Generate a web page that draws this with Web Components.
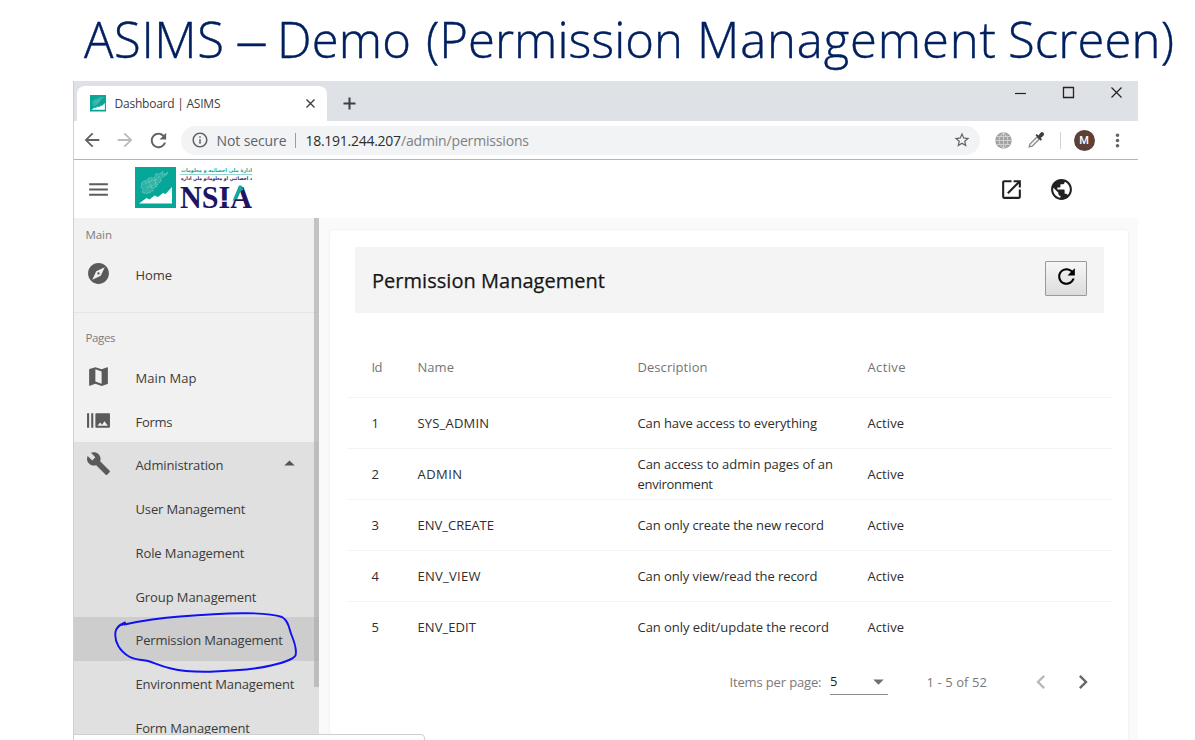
<!DOCTYPE html>
<html lang="en">
<head>
<meta charset="utf-8">
<title>ASIMS – Demo (Permission Management Screen)</title>
<style>
html,body{margin:0;background:#fff;overflow:hidden}
body{width:1195px;height:740px;font-family:"Open Sans","Noto Sans",sans-serif}
</style>
</head>
<body>
<demo-slide></demo-slide>
<script>
const define=(name,html,setup)=>customElements.define(name,class extends HTMLElement{
  connectedCallback(){
    if(this.shadowRoot)return;
    const t=document.createElement('template');
    t.innerHTML=typeof html==='function'?html(this):html;
    this.attachShadow({mode:'open'}).appendChild(t.content.cloneNode(true));
    if(setup)setup(this);
  }
});

const ICONS={
menu:'M3 18h18v-2H3v2zm0-5h18v-2H3v2zm0-7v2h18V6H3z',
explore:'M12 10.9c-.61 0-1.1.49-1.1 1.1s.49 1.1 1.1 1.1c.61 0 1.1-.49 1.1-1.1s-.49-1.1-1.1-1.1zM12 2C6.48 2 2 6.48 2 12s4.48 10 10 10 10-4.48 10-10S17.52 2 12 2zm2.19 12.19L6 18l3.81-8.19L18 6l-3.81 8.19z',
map:'M20.5 3l-.16.03L15 5.1 9 3 3.36 4.9c-.21.07-.36.25-.36.48V20.5c0 .28.22.5.5.5l.16-.03L9 18.9l6 2.1 5.64-1.9c.21-.07.36-.25.36-.48V3.5c0-.28-.22-.5-.5-.5zM15 19l-6-2.11V5l6 2.11V19z',
burst:'M1 5h2v14H1zm4 0h2v14H5zm17 0H10c-.55 0-1 .45-1 1v12c0 .55.45 1 1 1h12c.55 0 1-.45 1-1V6c0-.55-.45-1-1-1zM11 17l2.5-3.15L15.29 16l2.5-3.22L21 17H11z',
build:'M22.7 19l-9.1-9.1c.9-2.3.4-5-1.5-6.9-2-2-5-2.4-7.4-1.3L9 6 6 9 1.6 4.7C.4 7.1.9 10.1 2.9 12.1c1.9 1.9 4.6 2.4 6.9 1.5l9.1 9.1c.4.4 1 .4 1.4 0l2.3-2.3c.5-.4.5-1.1.1-1.4z',
open:'M19 19H5V5h7V3H5c-1.11 0-2 .9-2 2v14c0 1.1.89 2 2 2h14c1.1 0 2-.9 2-2v-7h-2v7zM14 3v2h3.59l-9.83 9.83 1.41 1.41L19 6.41V10h2V3h-7z',
public:'M12 2C6.48 2 2 6.48 2 12s4.48 10 10 10 10-4.48 10-10S17.52 2 12 2zm-1 17.93c-3.95-.49-7-3.85-7-7.93 0-.62.08-1.21.21-1.79L9 15v1c0 1.1.9 2 2 2v1.93zm6.9-2.54c-.26-.81-1-1.39-1.9-1.39h-1v-3c0-.55-.45-1-1-1H8v-2h2c.55 0 1-.45 1-1V7h2c1.1 0 2-.9 2-2v-.41c2.93 1.19 5 4.06 5 7.41 0 2.08-.8 3.97-2.1 5.39z',
refresh:'M17.65 6.35C16.2 4.9 14.21 4 12 4c-4.42 0-7.99 3.58-7.99 8s3.57 8 7.99 8c3.73 0 6.84-2.55 7.73-6h-2.08c-.82 2.33-3.04 4-5.65 4-3.31 0-6-2.69-6-6s2.69-6 6-6c1.66 0 3.14.69 4.22 1.78L13 11h7V4l-2.35 2.35z',
back:'M20 11H7.83l5.59-5.59L12 4l-8 8 8 8 1.41-1.41L7.83 13H20v-2z',
forward:'M12 4l-1.41 1.41L16.17 11H4v2h12.17l-5.58 5.59L12 20l8-8z',
info:'M11 17h2v-6h-2v6zm1-15C6.48 2 2 6.48 2 12s4.48 10 10 10 10-4.48 10-10S17.52 2 12 2zm0 18c-4.41 0-8-3.59-8-8s3.59-8 8-8 8 3.59 8 8-3.59 8-8 8zM11 9h2V7h-2v2z',
star:'M22 9.24l-7.19-.62L12 2 9.19 8.63 2 9.24l5.46 4.73L5.82 21 12 17.27 18.18 21l-1.63-7.03L22 9.24zM12 15.4l-3.76 2.27 1-4.28-3.32-2.88 4.38-.38L12 6.1l1.71 4.04 4.38.38-3.32 2.88 1 4.28L12 15.4z',
more:'M12 8c1.1 0 2-.9 2-2s-.9-2-2-2-2 .9-2 2 .9 2 2 2zm0 2c-1.1 0-2 .9-2 2s.9 2 2 2 2-.9 2-2-.9-2-2-2zm0 6c-1.1 0-2 .9-2 2s.9 2 2 2 2-.9 2-2-.9-2-2-2z',
left:'M15.41 7.41L14 6l-6 6 6 6 1.41-1.41L10.83 12z',
right:'M10 6L8.59 7.41 13.17 12l-4.58 4.59L10 18l6-6z',
down:'M7 10l5 5 5-5z',
up:'M7 14l5-5 5 5z'};

define('ui-icon',el=>`<style>:host{display:block;flex:none;width:${el.getAttribute('size')}px;height:${el.getAttribute('size')}px}svg{display:block;width:100%;height:100%}</style>
<svg viewBox="0 0 24 24" fill="currentColor"><path d="${ICONS[el.getAttribute('name')]}"/></svg>`);

/* A one-line label whose tracking is adjusted to fill the given width. */
define('ui-text','<style>:host{display:block;flex:none;white-space:nowrap}span{display:inline-block}</style><span><slot></slot></span>',el=>{
  const s=el.shadowRoot.querySelector('span'),w=+el.getAttribute('w'),n=el.textContent.length;
  if(w&&n>1){
    const natural=s.getBoundingClientRect().width;
    s.style.letterSpacing=((w-natural)/(n-1)).toFixed(3)+'px';
    el.style.width=w+'px';
  }
});

const AFG='M3 12l2-2 2 1 2-3 3-1 2 1 2-2 1-3 3 1 2-2 2-1-1 3 3-1 3-1-2 3-3 1-2 2 0 3-3 2-1 3-3 1-1 3-3 2-4 1-4-1 1-3-2-2z';
define('nsia-mark',`<style>:host{display:block;flex:none}svg{display:block;width:100%;height:100%}</style>
<svg viewBox="0 0 41 41"><rect width="41" height="41" fill="#06a698"/>
<g transform="translate(4 3.5)" fill="#2fb3a6"><path d="${AFG}"/></g>
<g transform="translate(4 3.5)" fill="none" stroke="#8fd6cc" stroke-width=".7" stroke-dasharray="2 1"><path d="${AFG}M6 13l6-3 5 0 4-5M8 17l6-2 4-4M10 11l3 7M16 8l1 7"/></g>
<path d="M4 36.500L11.500 31l3 1.500 5-4 3.500 1.500 5-4 2.500 1 6.500-7v16.500z" fill="#fff"/></svg>`);

define('nsia-logo',`<style>:host{display:flex;gap:4px;width:118px;height:42px}nsia-mark{width:41px;height:41px}
svg{display:block;width:73px;height:42px;overflow:visible}</style>
<nsia-mark></nsia-mark>
<svg viewBox="0 0 73 42">
<text x="72" y="4.800" direction="rtl" font-family="DejaVu Sans,sans-serif" font-weight="700" font-size="5.200" textLength="71" lengthAdjust="spacingAndGlyphs" fill="#13aa9e">ادارۀ ملی احصائیه و معلومات</text>
<path d="M0 7.500h72" stroke="#7acbc5" stroke-width=".8"/>
<text x="72" y="13" direction="rtl" font-family="DejaVu Sans,sans-serif" font-weight="700" font-size="5" textLength="71" lengthAdjust="spacingAndGlyphs" fill="#2a2169">د احصائیې او معلوماتو ملي اداره</text>
<text x="0" y="40.500" font-family="Liberation Serif,serif" font-weight="700" font-size="32" textLength="72" lengthAdjust="spacingAndGlyphs" fill="#1d1464">NSIA</text>
<path d="M38 33.500h11v1.300h-11z" fill="#fff"/>
<path d="M52.500 34L59 18.500h2.500l2 4-3 2-3 7z" fill="#12a99b"/>
</svg>`);

define('browser-tabs',`<style>
:host{display:flex;height:40px;background:#dee1e6;color:#3c4043}
.tab{display:flex;align-items:center;box-sizing:border-box;width:250px;height:35px;margin:5px 0 0 3px;padding-left:12.500px;background:#fff;border-radius:8px 8px 0 0;font-size:12px}
nsia-mark{width:16.500px;height:16.500px;margin-right:8.500px}
ui-text{width:107px}
.x{width:9px;height:9px;margin-left:auto;margin-right:12.500px}
.plus{width:13px;height:13px;margin:16px 0 0 16px}
.ctl{margin-left:auto;display:flex;gap:37px;padding:6px 16.500px 0 0;color:#222}
svg{display:block;flex:none;fill:none;stroke:currentColor;overflow:visible}
</style>
<div class="tab"><nsia-mark></nsia-mark><ui-text w="106">Dashboard | ASIMS</ui-text>
<svg class="x" viewBox="0 0 9 9" stroke-width="1.400"><path d="M.5.5l8 8m0-8l-8 8"/></svg></div>
<svg class="plus" viewBox="0 0 13 13" stroke-width="2"><path d="M6.500 0.500v12M.5 6.500h12"/></svg>
<div class="ctl"><svg width="11" height="11" stroke-width="1.200"><path d="M0 6.500h11"/></svg>
<svg width="11" height="11" stroke-width="1.300"><path d="M.5.5h10v10h-10z"/></svg>
<svg width="11" height="11" stroke-width="1.200"><path d="M.5.5l10 10m0-10l-10 10"/></svg></div>`);

define('browser-toolbar',`<style>
:host{display:flex;align-items:center;height:38px;border-bottom:1px solid #b2b5b8;background:#fff;color:#5f6368;font-size:14px;padding-left:6.500px}
.fwd{color:#b9bbbd;margin:0 11px 0 11.500px}
.pill{display:flex;align-items:center;box-sizing:border-box;width:799px;height:29px;margin-left:10.500px;padding-left:10px;border-radius:15px;background:#f1f3f4}
.bar{width:1px;height:15px;background:#9a9da0;margin:0 10px 0 8px}
.host{color:#2b2e32}.path{color:#7d8185}
.star{margin:0 9px 0 auto}
.globe{width:17px;height:17px;margin:0 15.500px 0 15px}
.sep{width:1px;height:17px;background:#d0d3d6;margin:0 13px 0 14.500px}
.av{width:21px;height:21px;border-radius:50%;background:#5d4037;color:#fff;display:grid;place-items:center;font:500 11px/1 Roboto,sans-serif;margin-right:12.500px}
svg{display:block;flex:none}
</style>
<ui-icon name="back" size="22"></ui-icon><ui-icon class="fwd" name="forward" size="22"></ui-icon><ui-icon name="refresh" size="23"></ui-icon>
<div class="pill"><ui-icon name="info" size="18"></ui-icon><ui-text w="70" style="margin-left:8px">Not secure</ui-text><i class="bar"></i>
<ui-text class="host" w="95.500">18.191.244.207</ui-text><ui-text class="path" w="128">/admin/permissions</ui-text><ui-icon class="star" name="star" size="18"></ui-icon></div>
<svg class="globe" viewBox="0 0 17 17"><circle cx="8.500" cy="8.500" r="8.300" fill="#a2a2a2"/><path d="M8.500 0v17M0 8.500h17M1.500 4.500h14M1.500 12.500h14M8.500.3q-9 8.200 0 16.400q9-8.200 0-16.400" fill="none" stroke="#d5d5d5" stroke-width=".9"/></svg>
<svg width="18" height="18" viewBox="0 0 18 18"><path d="M2.200 15.800l.8-2.800 7-7 2.200 2.200-7 7z" fill="#f7f7f7" stroke="#8a8a8a" stroke-width="1.300"/><path d="M8.500 4.300l1.300-1.200 1.600 1.300 2.200-2.700q1.500-1.400 2.900 0 1.300 1.500-.1 3l-2.600 2.200 1.200 1.700-1.300 1.200z" fill="#3f3f3f"/></svg>
<i class="sep"></i><div class="av">M</div><ui-icon name="more" size="21"></ui-icon>`);

define('app-header',`<style>
:host{display:flex;align-items:center;height:58px;background:#fff;padding-left:11.500px;color:#212121;box-sizing:border-box}
.m{color:#5e5e5e}nsia-logo{margin:-3px 0 0 24.500px}.o{margin-left:auto}.p{margin:0 64.500px 0 25px}
</style><ui-icon class="m" name="menu" size="25"></ui-icon><nsia-logo></nsia-logo><ui-icon class="o" name="open" size="25"></ui-icon><ui-icon class="p" name="public" size="25"></ui-icon>`);

define('nav-item',el=>`<style>
:host{display:flex;align-items:center;flex:none;height:43.750px;padding-left:11.500px;box-sizing:border-box;color:#3b3b3b;font-size:13px}
:host([active]){background:#cdcdcd}
.i{width:25px;margin-right:25px;color:#5a5a5a}
ui-text{margin-top:3px}
.c{margin-left:auto;margin-right:17px;color:#555}
</style><div class="i">${el.hasAttribute('icon')?`<ui-icon name="${el.getAttribute('icon')}" size="25"></ui-icon>`:''}</div><ui-text w="${el.getAttribute('w')}">${el.getAttribute('label')}</ui-text>${el.hasAttribute('open')?'<ui-icon class="c" name="up" size="25"></ui-icon>':''}`);

define('side-nav',`<style>
:host{display:block;position:relative;width:245px;height:522px;background:#f1f1f1;overflow:hidden;font-size:11.500px;color:#7b7b7b}
.h{height:33.500px;padding-left:11.500px;box-sizing:border-box;line-height:34px}
.main{height:95px;border-bottom:1px solid #e6e6e6;box-sizing:border-box}
.pages{padding-top:9px}
.pages .h{line-height:32px;height:32.500px}
.group{background:#e0e0e0}
.thumb{position:absolute;right:0;top:0;width:5px;height:469px;background:#aaa;opacity:.65}
</style>
<div class="main"><ui-text class="h" w="26.500">Main</ui-text><nav-item icon="explore" w="36.500" label="Home"></nav-item></div>
<div class="pages"><ui-text class="h" w="30">Pages</ui-text><nav-item icon="map" w="61" label="Main Map"></nav-item><nav-item icon="burst" w="37" label="Forms"></nav-item></div>
<div class="group"><nav-item icon="build" open w="88" label="Administration"></nav-item><nav-item w="110" label="User Management"></nav-item><nav-item w="109" label="Role Management"></nav-item><nav-item w="121" label="Group Management"></nav-item><nav-item active w="147.500" label="Permission Management"></nav-item><nav-item w="159" label="Environment Management"></nav-item><nav-item w="114.500" label="Form Management"></nav-item></div>
<i class="thumb"></i>`);

const ROWS=[['1','SYS_ADMIN',71.5,[['Can have access to everything',179.5]]],['2','ADMIN',44.5,[['Can access to admin pages of an',195.5],['environment',75.5]]],['3','ENV_CREATE',76.5,[['Can only create the new record',186.5]]],['4','ENV_VIEW',63,[['Can only view/read the record',180]]],['5','ENV_EDIT',58.5,[['Can only edit/update the record',191.5]]]];
define('permission-table',`<style>
:host{display:block;width:765px;font-size:13px;color:#2e2e2e}
.r{display:grid;grid-template-columns:46px 220px 230px 1fr;align-items:center;box-sizing:border-box;height:51px;padding-left:24.500px;border-bottom:1px solid #f4f4f4;line-height:20px}
.r:last-child{border-color:transparent}
.h{height:59.500px;color:#757575}
</style><div class="r h"><ui-text w="11">Id</ui-text><ui-text w="36.500">Name</ui-text><ui-text w="70">Description</ui-text><ui-text w="38">Active</ui-text></div>
${ROWS.map(r=>`<div class="r"><ui-text>${r[0]}</ui-text><ui-text w="${r[2]}">${r[1]}</ui-text><div>${r[3].map(l=>`<ui-text w="${l[1]}">${l[0]}</ui-text>`).join('')}</div><ui-text w="36.500">Active</ui-text></div>`).join('')}`);

define('table-paginator',`<style>
:host{display:flex;align-items:center;height:28px;color:#7a7a7a;font-size:13px;padding-left:382.500px}
.s{display:flex;align-items:center;width:58px;height:26px;box-sizing:border-box;margin-left:8.500px;border-bottom:1px solid #8b8b8b;color:#222}
.s ui-icon{margin-left:auto;margin-right:-3px;color:#6f6f6f}
</style><ui-text w="92">Items per page:</ui-text><div class="s"><ui-text>5</ui-text><ui-icon name="down" size="25"></ui-icon></div>
<ui-text w="60.500" style="margin-left:38.500px">1 - 5 of 52</ui-text><ui-icon name="left" size="28" style="margin-left:39.500px;color:#b9b9b9"></ui-icon><ui-icon name="right" size="28" style="margin-left:14.500px;color:#666"></ui-icon>`);

define('permission-card',`<style>
:host{display:block;box-sizing:border-box;width:798px;height:520px;margin:12px 0 0 11px;padding:17px 0 0 17px;background:#fff;border-radius:3px;box-shadow:0 0 2px rgba(0,0,0,.1)}
.head{display:flex;align-items:center;justify-content:space-between;box-sizing:border-box;width:749px;height:66px;margin-left:8px;padding:0 17px;background:#f4f4f4;font-size:20px;color:#161616}
.head ui-text{-webkit-text-stroke:.25px currentColor}
button{display:grid;place-items:center;box-sizing:border-box;width:42px;height:35px;margin:-4px 0 0;padding:0 0 3px;border:1px solid #999;border-radius:1px;background:linear-gradient(#f6f6f6,#dcdcdc);color:#000}
permission-table{margin:25px 0 0 0}table-paginator{margin-top:15px}
</style><div class="head"><ui-text w="233">Permission Management</ui-text><button aria-label="Refresh"><ui-icon name="refresh" size="25"></ui-icon></button></div>
<permission-table></permission-table><table-paginator></table-paginator>`);

define('browser-window',`<style>
:host{display:block;position:relative;box-sizing:border-box;width:1065px;height:659px;margin-left:73px;border-left:1px solid #c8cfe2;overflow:hidden}
.body{display:flex;background:#fafafa}
.status{position:absolute;left:-2px;bottom:-2px;width:353px;height:8px;box-sizing:border-box;background:#fff;border:1px solid #cfcfcf;border-radius:0 4px 0 0}
</style><browser-tabs></browser-tabs><browser-toolbar></browser-toolbar><app-header></app-header><div class="body"><side-nav></side-nav><permission-card></permission-card></div><div class="status"></div>`);

define('demo-slide',`<style>
:host{display:block;position:relative;width:1195px;height:740px;overflow:hidden}
h1{display:flex;margin:0;height:81px;padding-left:84px;box-sizing:border-box;font-size:49px;font-weight:300;line-height:78px;color:#002060;-webkit-text-stroke:.4px #002060}
.dash{width:42px;margin-left:11px;transform:scaleX(1.350);transform-origin:0 0}
.ink{position:absolute;left:110px;top:608px;width:192px;height:70px}
</style><h1><ui-text w="140">ASIMS</ui-text> <ui-text class="dash">–</ui-text> <ui-text w="134">Demo</ui-text> <ui-text w="257" style="margin-left:15px">(Permission</ui-text> <ui-text w="299" style="margin-left:14px">Management</ui-text> <ui-text w="166" style="margin-left:12px">Screen)</ui-text></h1><browser-window></browser-window>
<svg class="ink" viewBox="110 608 192 70" fill="none" stroke="#1010f0" stroke-width="1.900" stroke-linecap="round" stroke-linejoin="round"><path d="M122 625L125 622.500L124.500 624.500C145 620 158 618 180 616.500C205 614.500 225 613.500 242 613.300C262 613 273 614 282 617C289 621 289 629 291.500 635C294 641 297 650 295.500 655.500C293 660 281 663 271 665.500C253 670 231 671 210 671.700C194 672 181 671 171 668.500C159 665.500 154 662.500 148 661C141 659.500 135 660 129 656.500C120 651 114 642 115.500 632C116 628 119 625 125 622.500"/></svg>`);
</script>
</body>
</html>
